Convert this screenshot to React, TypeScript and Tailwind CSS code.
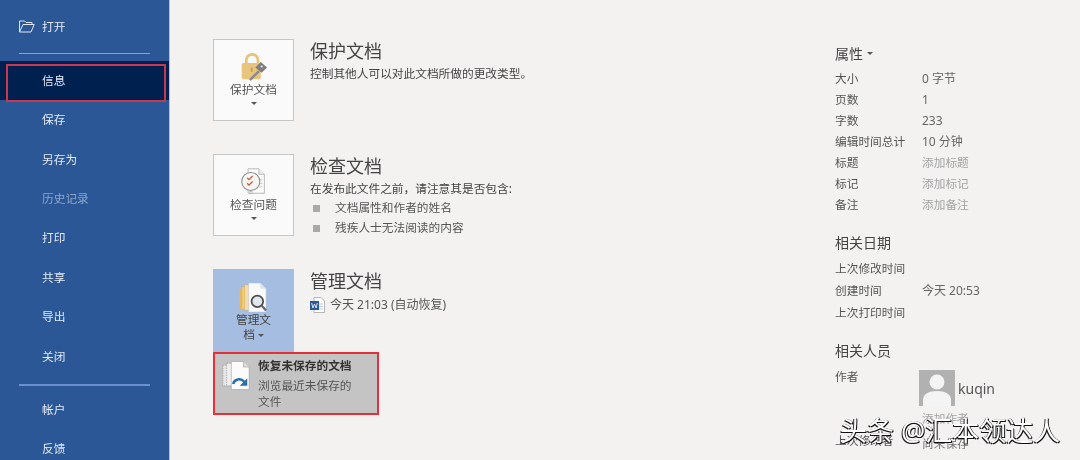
const nav = [
  { t: "信息", active: true },
  { t: "保存" },
  { t: "另存为" },
  { t: "历史记录", dim: true },
  { t: "打印" },
  { t: "共享" },
  { t: "导出" },
  { t: "关闭" },
];

const props: [string, string, boolean?][] = [
  ["大小", "0 字节"],
  ["页数", "1"],
  ["字数", "233"],
  ["编辑时间总计", "10 分钟"],
  ["标题", "添加标题", true],
  ["标记", "添加标记", true],
  ["备注", "添加备注", true],
];

const dates: [string, string][] = [
  ["上次修改时间", ""],
  ["创建时间", "今天 20:53"],
  ["上次打印时间", ""],
];

function NavItem({ t, active, dim }: { t: string; active?: boolean; dim?: boolean }) {
  return (
    <div
      className={`h-[39.4px] shrink-0 flex items-center pl-[42px] text-[11.7px] ${active ? "bg-[#002050]" : ""} ${dim ? "text-[#8fa6c8]" : "text-[#e3eaf4]"}`}
    >
      {t}
    </div>
  );
}

function Caret() {
  return <span className="inline-block w-0 h-0 border-l-[3px] border-r-[3px] border-t-[3px] border-l-transparent border-r-transparent border-t-[#555]" />;
}

function LockIcon() {
  return (
    <svg width="29" height="29" viewBox="0 0 32 32" className="mt-[13px]">
      <path d="M8 13V9a6.5 6.5 0 0 1 13 0v4" fill="none" stroke="#e6c27a" strokeWidth="3" />
      <rect x="3" y="12" width="21" height="18" rx="2" fill="#e8c47c" />
      <rect x="13" y="17" width="2" height="5" fill="#c9a25a" />
      <path d="M11 30l10-10 2 2-10 10z" fill="#8a8a8a" />
      <path d="M24 11l7 6-6 6-7-6z" fill="#7d7d7d" />
      <circle cx="25" cy="16" r="1.2" fill="#e8e8e8" />
    </svg>
  );
}

function InspectIcon() {
  return (
    <svg width="29" height="29" viewBox="0 0 32 32" className="mt-[13px]">
      <path d="M10 2h12l6 6v21H10z" fill="#fbfbfb" stroke="#b5b5b5" />
      <path d="M22 2v6h6" fill="#eee" stroke="#b5b5b5" />
      <path d="M22 14h4M23 18h3M22 22h4" stroke="#c9c9c9" />
      <circle cx="13" cy="16" r="10" fill="#f8f6f3" stroke="#8e8e8e" strokeWidth="1.2" />
      <path d="M9 12l2 2 4-4M9 18l2 2 4-4" fill="none" stroke="#c8553d" strokeWidth="1.4" />
      <rect x="12" y="27" width="2.5" height="2.5" fill="none" stroke="#aaa" strokeWidth="0.7" />
    </svg>
  );
}

function ManageIcon() {
  return (
    <svg width="31" height="29" viewBox="0 0 32 30" className="mt-[14px]">
      <rect x="1" y="6" width="18" height="21" fill="#e6b95f" />
      <rect x="4" y="4" width="18" height="23" fill="#efcc85" stroke="#d9ae5a" strokeWidth="0.5" />
      <rect x="7" y="2" width="18" height="26" fill="#f4dca6" stroke="#d9ae5a" strokeWidth="0.5" />
      <path d="M11 0h12l6 6v24H11z" fill="#fafafa" stroke="#b9c4d6" strokeWidth="0.6" />
      <path d="M23 0v6h6" fill="#dde3ec" />
      <circle cx="20" cy="19" r="6" fill="#c7d3e3" fillOpacity="0.5" stroke="#4d4d4d" strokeWidth="1.8" />
      <path d="M24.5 23.5l4.5 5" stroke="#6b6b6b" strokeWidth="2.4" />
    </svg>
  );
}

function WordIcon() {
  return (
    <svg width="15" height="16" viewBox="0 0 15 16" className="shrink-0">
      <path d="M4 0.5h7l3.5 3.5v11.5H4z" fill="#fff" stroke="#9a9a9a" strokeWidth="0.7" />
      <path d="M9 7h4M9 9.5h4M9 12h4" stroke="#a9b7cf" strokeWidth="0.8" />
      <rect x="0" y="4" width="9" height="9" fill="#2b5797" />
      <path d="M1.7 6l1.2 5 1.6-4 1.6 4 1.2-5" fill="none" stroke="#fff" strokeWidth="0.8" />
    </svg>
  );
}

function RecoverIcon() {
  return (
    <svg width="30" height="31" viewBox="0 0 32 32" className="shrink-0">
      <path d="M2 5h14v22H2z" fill="#e6e6e6" stroke="#888" strokeWidth="0.6" strokeDasharray="1.5 1" />
      <path d="M6 3h14v24H6z" fill="#efefef" stroke="#888" strokeWidth="0.6" strokeDasharray="1.5 1" />
      <path d="M11 1h13l6 6v24H11z" fill="#fbfbfb" stroke="#9a9a9a" strokeWidth="0.6" />
      <path d="M24 1v6h6" fill="#ddd" stroke="#9a9a9a" strokeWidth="0.6" />
      <path d="M13 25c1-5 8-7 12-2" fill="none" stroke="#2e6da8" strokeWidth="2.6" />
      <path d="M28 19v8h-8z" fill="#2e6da8" />
    </svg>
  );
}

function Row({ k, v, muted }: { k: string; v: string; muted?: boolean }) {
  return (
    <div className="flex h-[21px] items-center text-[11.7px]">
      <div className="w-[87px] shrink-0 text-[#555] whitespace-nowrap">{k}</div>
      <div className={muted ? "text-[#a3a3a3]" : "text-[#666] text-[12px]"}>{v}</div>
    </div>
  );
}

function TileLabel({ children }: { children: React.ReactNode }) {
  return <div className="text-[11.7px] leading-[16px] text-[#555] text-center">{children}</div>;
}

export default function App() {
  return (
    <div
      className="relative w-[1080px] h-[460px] overflow-hidden flex bg-[#f3f2f1] blur-[0.35px]"
      style={{ fontFamily: '"Noto Sans", "Noto Sans CJK SC", sans-serif' }}
    >
      <aside className="w-[170px] shrink-0 h-full bg-[#2b5797] border-r-[1.5px] border-[#a9c4ea] flex flex-col">
        <div className="h-[53px] shrink-0 flex items-center pl-[19px] text-[11.7px] text-[#e3eaf4]">
          <svg width="16" height="13" viewBox="0 0 16 13" className="mr-[7px]">
            <path d="M0.5 12V1h5l1.5 1.5h6V4.5M0.5 12L4 4.5h11.2L12 12z" fill="none" stroke="#dfe8f5" strokeWidth="1" />
          </svg>
          打开
        </div>
        <div className="h-px shrink-0 ml-[19px] w-[131px] bg-[#7ea4dc]" />
        <div className="h-[7px] shrink-0" />
        {nav.map((n) => (
          <NavItem key={n.t} {...n} />
        ))}
        <div className="h-[8px] shrink-0" />
        <div className="h-[2px] shrink-0 ml-[19px] w-[131px] bg-[#6a91cf]" />
        <div className="h-[4px] shrink-0" />
        <NavItem t="帐户" />
        <NavItem t="反馈" />
      </aside>

      <main className="w-[622px] shrink-0 pl-[43px] pt-[39px]">
        <section className="flex h-[115px]">
          <div className="w-[81px] h-[82px] shrink-0 bg-[#fafafa] border border-[#c6c6c6] flex flex-col items-center">
            <div className="-mt-[1px] flex"><LockIcon /></div>
            <TileLabel>保护文档</TileLabel>
            <div className="mt-[5px] flex"><Caret /></div>
          </div>
          <div className="ml-[16px]">
            <h2 className="text-[18px] leading-[24px] text-[#444]">保护文档</h2>
            <p className="mt-[1px] text-[11.7px] leading-[18px] text-[#444]">控制其他人可以对此文档所做的更改类型。</p>
          </div>
        </section>

        <section className="flex h-[115px]">
          <div className="w-[81px] h-[82px] shrink-0 bg-[#fafafa] border border-[#c6c6c6] flex flex-col items-center">
            <div className="-mt-[1px] flex"><InspectIcon /></div>
            <TileLabel>检查问题</TileLabel>
            <div className="mt-[5px] flex"><Caret /></div>
          </div>
          <div className="ml-[16px]">
            <h2 className="text-[18px] leading-[24px] text-[#444]">检查文档</h2>
            <p className="mt-[1px] text-[11.7px] leading-[18px] text-[#444]">在发布此文件之前，请注意其是否包含:</p>
            <ul className="mt-[1px]">
              <li className="flex items-center h-[20px] text-[11.7px] text-[#555]">
                <span className="w-[7px] h-[7px] bg-[#a9a9a9] ml-[3px] mr-[15px]" />文档属性和作者的姓名
              </li>
              <li className="flex items-center h-[20px] text-[11.7px] text-[#555]">
                <span className="w-[7px] h-[7px] bg-[#a9a9a9] ml-[3px] mr-[15px]" />残疾人士无法阅读的内容
              </li>
            </ul>
          </div>
        </section>

        <section className="flex">
          <div className="w-[81px] shrink-0">
            <div className="h-[83px] bg-[#a4bde0] flex flex-col items-center">
              <div className="flex"><ManageIcon /></div>
              <div className="text-[11.7px] leading-[15px] text-[#444] text-center">
                管理文<br />档 <span className="inline-flex align-middle"><Caret /></span>
              </div>
            </div>
            <div className="relative w-[166px] h-[63px] bg-[#c4c4c4] border-2 border-[#e5303a] flex pl-[6px] pt-[6px]">
              <RecoverIcon />
              <div className="ml-[7px] -mt-[2px] text-[11.7px] leading-[16px] text-[#555] w-[100px]">
                <div className="font-bold text-[#333] leading-[14px] mb-[5px] whitespace-nowrap">恢复未保存的文档</div>
                浏览最近未保存的<br />文件
              </div>
            </div>
          </div>
          <div className="ml-[16px]">
            <h2 className="text-[18px] leading-[24px] text-[#444]">管理文档</h2>
            <div className="mt-[3px] flex items-center text-[12px] text-[#555]">
              <WordIcon />
              <span className="ml-[5px]">今天 21:03 (自动恢复)</span>
            </div>
          </div>
        </section>
      </main>

      <aside className="flex-1 pl-[43px] pt-[43px]">
        <div className="flex items-center h-[21px] text-[14px] text-[#444]">
          属性<span className="ml-[4px] flex"><Caret /></span>
        </div>
        <div className="mt-[4px]">
          {props.map(([k, v, m]) => (
            <Row key={k} k={k} v={v} muted={m} />
          ))}
        </div>
        <div className="mt-[17px] h-[21px] flex items-center text-[14px] text-[#444]">相关日期</div>
        <div className="mt-[5px] flex flex-col gap-px">
          {dates.map(([k, v]) => (
            <Row key={k} k={k} v={v} />
          ))}
        </div>
        <div className="mt-[17px] h-[21px] flex items-center text-[14px] text-[#444]">相关人员</div>
        <div className="mt-[3px] flex text-[11.7px] text-[#555]">
          <div className="w-[84px] shrink-0 leading-[24px]">作者</div>
          <div className="mt-[6px]">
            <div className="flex items-center">
              <div className="w-[36px] h-[36px] bg-[#b1b1b1] overflow-hidden">
                <svg width="36" height="36" viewBox="0 0 36 36">
                  <circle cx="18" cy="12" r="7.5" fill="#f4f4f4" />
                  <path d="M4 36v-6c0-6 6-9 14-9s14 3 14 9v6z" fill="#f4f4f4" />
                </svg>
              </div>
              <span className="ml-[3px] text-[14px] text-[#555]">kuqin</span>
            </div>
            <div className="mt-[4px] ml-[3px] text-[#a3a3a3] leading-[16px]">添加作者</div>
          </div>
        </div>
        <div className="mt-[6px] flex text-[11.7px] leading-[16px]">
          <div className="w-[87px] shrink-0 text-[#555]">上次修改者</div>
          <div className="mt-[3px] text-[#777]">尚未保存</div>
        </div>
      </aside>

      <div
        className="absolute left-[840px] top-[413px] text-[27px] leading-[36px] text-white whitespace-nowrap"
        style={{ textShadow: "1px 1px 0 #111, -1px 1px 0 #222, 0.5px -0.5px 0 #333" }}
      >
        头条 @汇本领达人
      </div>
      <div className="absolute left-[6px] top-[64px] w-[160px] h-[38px] border-2 border-[#c8394e] pointer-events-none" />
    </div>
  );
}
